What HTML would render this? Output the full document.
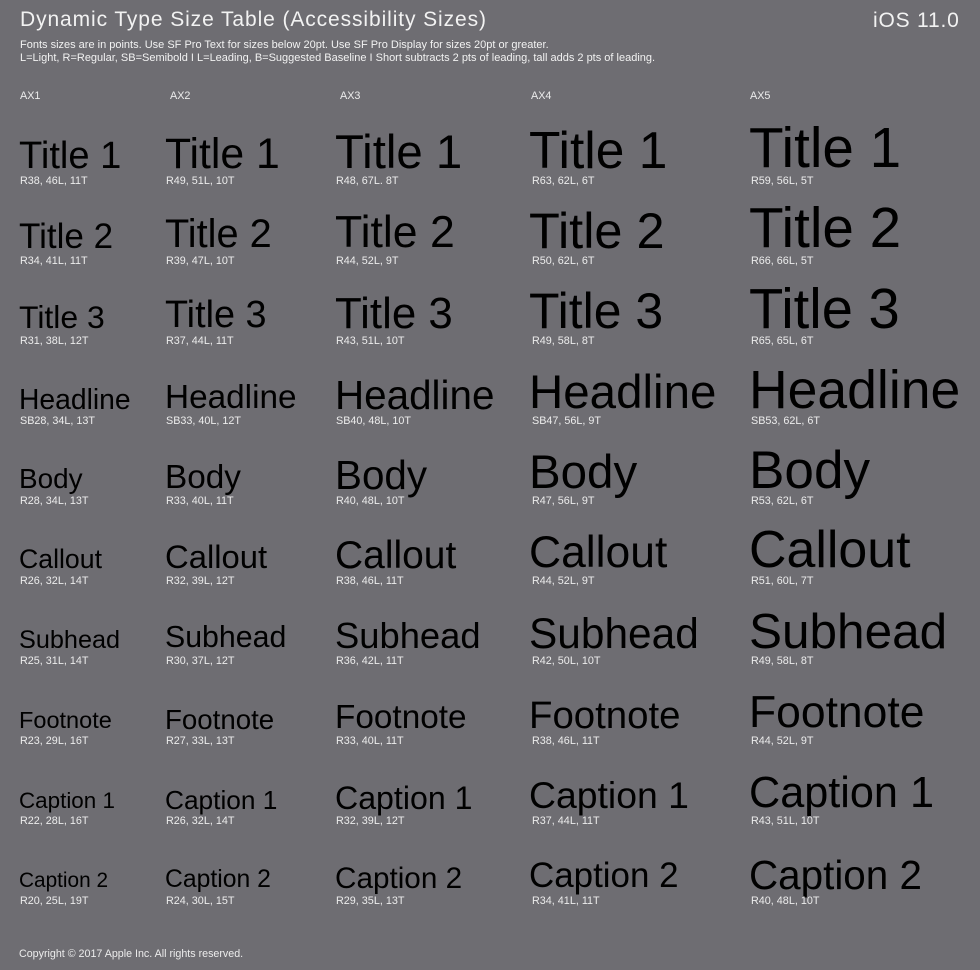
<!DOCTYPE html>
<html><head><meta charset="utf-8"><style>
body{margin:0;background:#6e6d72;}
#p{position:relative;width:980px;height:970px;overflow:hidden;background:#6e6d72;font-family:"Liberation Sans",sans-serif;}
.t{position:absolute;white-space:nowrap;line-height:1;color:#000;font-size:calc(var(--s) * var(--k,1.01));top:calc(var(--b) - 0.8465 * var(--s) * var(--k,1.01));}
.ti{--k:1.03;}
.l{position:absolute;white-space:nowrap;line-height:1;color:#ececec;font-size:10.8px;}
.h{position:absolute;white-space:nowrap;line-height:1;color:#f2f2f2;}
</style></head><body><div id="p">
<div class="h" style="left:20px;top:9px;font-size:21px;letter-spacing:0.9px">Dynamic Type Size Table (Accessibility Sizes)</div>
<div class="h" style="left:873px;top:10px;font-size:21px;letter-spacing:0.8px">iOS 11.0</div>
<div class="h" style="left:20px;top:40px;font-size:11px">Fonts sizes are in points. Use SF Pro Text for sizes below 20pt. Use SF Pro Display for sizes 20pt or greater.</div>
<div class="h" style="left:20px;top:53px;font-size:11px">L=Light, R=Regular, SB=Semibold I L=Leading, B=Suggested Baseline I Short subtracts 2 pts of leading, tall adds 2 pts of leading.</div>
<div class="l" style="left:20px;top:91px">AX1</div>
<div class="l" style="left:170px;top:91px">AX2</div>
<div class="l" style="left:340px;top:91px">AX3</div>
<div class="l" style="left:531px;top:91px">AX4</div>
<div class="l" style="left:750px;top:91px">AX5</div>

<!-- col1 -->
<div class="t ti" style="left:19px;--b:169px;--s:37px">Title 1</div><div class="l" style="left:20px;top:176px">R38, 46L, 11T</div>
<div class="t ti" style="left:19px;--b:249px;--s:34px">Title 2</div><div class="l" style="left:20px;top:256px">R34, 41L, 11T</div>
<div class="t ti" style="left:19px;--b:329px;--s:31px">Title 3</div><div class="l" style="left:20px;top:336px">R31, 38L, 12T</div>
<div class="t" style="left:19px;--b:409px;--s:28px">Headline</div><div class="l" style="left:20px;top:416px">SB28, 34L, 13T</div>
<div class="t" style="left:19px;--b:489px;--s:27.6px">Body</div><div class="l" style="left:20px;top:496px">R28, 34L, 13T</div>
<div class="t" style="left:19px;--b:569px;--s:26.4px">Callout</div><div class="l" style="left:20px;top:576px">R26, 32L, 14T</div>
<div class="t" style="left:19px;--b:649px;--s:25px">Subhead</div><div class="l" style="left:20px;top:656px">R25, 31L, 14T</div>
<div class="t" style="left:19px;--b:729px;--s:23.3px">Footnote</div><div class="l" style="left:20px;top:736px">R23, 29L, 16T</div>
<div class="t" style="left:19px;--b:809px;--s:22.2px">Caption 1</div><div class="l" style="left:20px;top:816px">R22, 28L, 16T</div>
<div class="t" style="left:19px;--b:889px;--s:20.6px">Caption 2</div><div class="l" style="left:20px;top:896px">R20, 25L, 19T</div>

<!-- col2 -->
<div class="t ti" style="left:165px;--b:169px;--s:41.5px">Title 1</div><div class="l" style="left:166px;top:176px">R49, 51L, 10T</div>
<div class="t ti" style="left:165px;--b:249px;--s:38.6px">Title 2</div><div class="l" style="left:166px;top:256px">R39, 47L, 10T</div>
<div class="t ti" style="left:165px;--b:329px;--s:36.7px">Title 3</div><div class="l" style="left:166px;top:336px">R37, 44L, 11T</div>
<div class="t" style="left:165px;--b:409px;--s:33px">Headline</div><div class="l" style="left:166px;top:416px">SB33, 40L, 12T</div>
<div class="t" style="left:165px;--b:489px;--s:33px">Body</div><div class="l" style="left:166px;top:496px">R33, 40L, 11T</div>
<div class="t" style="left:165px;--b:569px;--s:32.5px">Callout</div><div class="l" style="left:166px;top:576px">R32, 39L, 12T</div>
<div class="t" style="left:165px;--b:649px;--s:30px">Subhead</div><div class="l" style="left:166px;top:656px">R30, 37L, 12T</div>
<div class="t" style="left:165px;--b:729px;--s:27.4px">Footnote</div><div class="l" style="left:166px;top:736px">R27, 33L, 13T</div>
<div class="t" style="left:165px;--b:809px;--s:26px">Caption 1</div><div class="l" style="left:166px;top:816px">R26, 32L, 14T</div>
<div class="t" style="left:165px;--b:889px;--s:24.5px">Caption 2</div><div class="l" style="left:166px;top:896px">R24, 30L, 15T</div>

<!-- col3 -->
<div class="t ti" style="left:335px;--b:169px;--s:46px">Title 1</div><div class="l" style="left:336px;top:176px">R48, 67L. 8T</div>
<div class="t ti" style="left:335px;--b:249px;--s:43.3px">Title 2</div><div class="l" style="left:336px;top:256px">R44, 52L, 9T</div>
<div class="t ti" style="left:335px;--b:329px;--s:42.6px">Title 3</div><div class="l" style="left:336px;top:336px">R43, 51L, 10T</div>
<div class="t" style="left:335px;--b:409px;--s:40px">Headline</div><div class="l" style="left:336px;top:416px">SB40, 48L, 10T</div>
<div class="t" style="left:335px;--b:489px;--s:40px">Body</div><div class="l" style="left:336px;top:496px">R40, 48L, 10T</div>
<div class="t" style="left:335px;--b:569px;--s:38.6px">Callout</div><div class="l" style="left:336px;top:576px">R38, 46L, 11T</div>
<div class="t" style="left:335px;--b:649px;--s:36px">Subhead</div><div class="l" style="left:336px;top:656px">R36, 42L, 11T</div>
<div class="t" style="left:335px;--b:729px;--s:33px">Footnote</div><div class="l" style="left:336px;top:736px">R33, 40L, 11T</div>
<div class="t" style="left:335px;--b:809px;--s:31.8px">Caption 1</div><div class="l" style="left:336px;top:816px">R32, 39L, 12T</div>
<div class="t" style="left:335px;--b:889px;--s:29.4px">Caption 2</div><div class="l" style="left:336px;top:896px">R29, 35L, 13T</div>

<!-- col4 -->
<div class="t ti" style="left:529px;--b:169px;--s:50px">Title 1</div><div class="l" style="left:532px;top:176px">R63, 62L, 6T</div>
<div class="t ti" style="left:529px;--b:249px;--s:49px">Title 2</div><div class="l" style="left:532px;top:256px">R50, 62L, 6T</div>
<div class="t ti" style="left:529px;--b:329px;--s:48.5px">Title 3</div><div class="l" style="left:532px;top:336px">R49, 58L, 8T</div>
<div class="t" style="left:529px;--b:409px;--s:47px">Headline</div><div class="l" style="left:532px;top:416px">SB47, 56L, 9T</div>
<div class="t" style="left:529px;--b:489px;--s:47px">Body</div><div class="l" style="left:532px;top:496px">R47, 56L, 9T</div>
<div class="t" style="left:529px;--b:569px;--s:44px">Callout</div><div class="l" style="left:532px;top:576px">R44, 52L, 9T</div>
<div class="t" style="left:529px;--b:649px;--s:42px">Subhead</div><div class="l" style="left:532px;top:656px">R42, 50L, 10T</div>
<div class="t" style="left:529px;--b:729px;--s:38px">Footnote</div><div class="l" style="left:532px;top:736px">R38, 46L, 11T</div>
<div class="t" style="left:529px;--b:809px;--s:37px">Caption 1</div><div class="l" style="left:532px;top:816px">R37, 44L, 11T</div>
<div class="t" style="left:529px;--b:889px;--s:34.6px">Caption 2</div><div class="l" style="left:532px;top:896px">R34, 41L, 11T</div>

<!-- col5 -->
<div class="t ti" style="left:749px;--b:169px;--s:55px">Title 1</div><div class="l" style="left:751px;top:176px">R59, 56L, 5T</div>
<div class="t ti" style="left:749px;--b:249px;--s:55px">Title 2</div><div class="l" style="left:751px;top:256px">R66, 66L, 5T</div>
<div class="t ti" style="left:749px;--b:329px;--s:54.5px">Title 3</div><div class="l" style="left:751px;top:336px">R65, 65L, 6T</div>
<div class="t" style="left:749px;--b:409px;--s:53px">Headline</div><div class="l" style="left:751px;top:416px">SB53, 62L, 6T</div>
<div class="t" style="left:749px;--b:489px;--s:52.6px">Body</div><div class="l" style="left:751px;top:496px">R53, 62L, 6T</div>
<div class="t" style="left:749px;--b:569px;--s:51.4px">Callout</div><div class="l" style="left:751px;top:576px">R51, 60L, 7T</div>
<div class="t" style="left:749px;--b:649px;--s:49px">Subhead</div><div class="l" style="left:751px;top:656px">R49, 58L, 8T</div>
<div class="t" style="left:749px;--b:729px;--s:44px">Footnote</div><div class="l" style="left:751px;top:736px">R44, 52L, 9T</div>
<div class="t" style="left:749px;--b:809px;--s:42.8px">Caption 1</div><div class="l" style="left:751px;top:816px">R43, 51L, 10T</div>
<div class="t" style="left:749px;--b:889px;--s:40px">Caption 2</div><div class="l" style="left:751px;top:896px">R40, 48L, 10T</div>

<div class="l" style="left:19px;top:949px;font-size:10.7px">Copyright © 2017 Apple Inc. All rights reserved.</div>
</div></body></html>
